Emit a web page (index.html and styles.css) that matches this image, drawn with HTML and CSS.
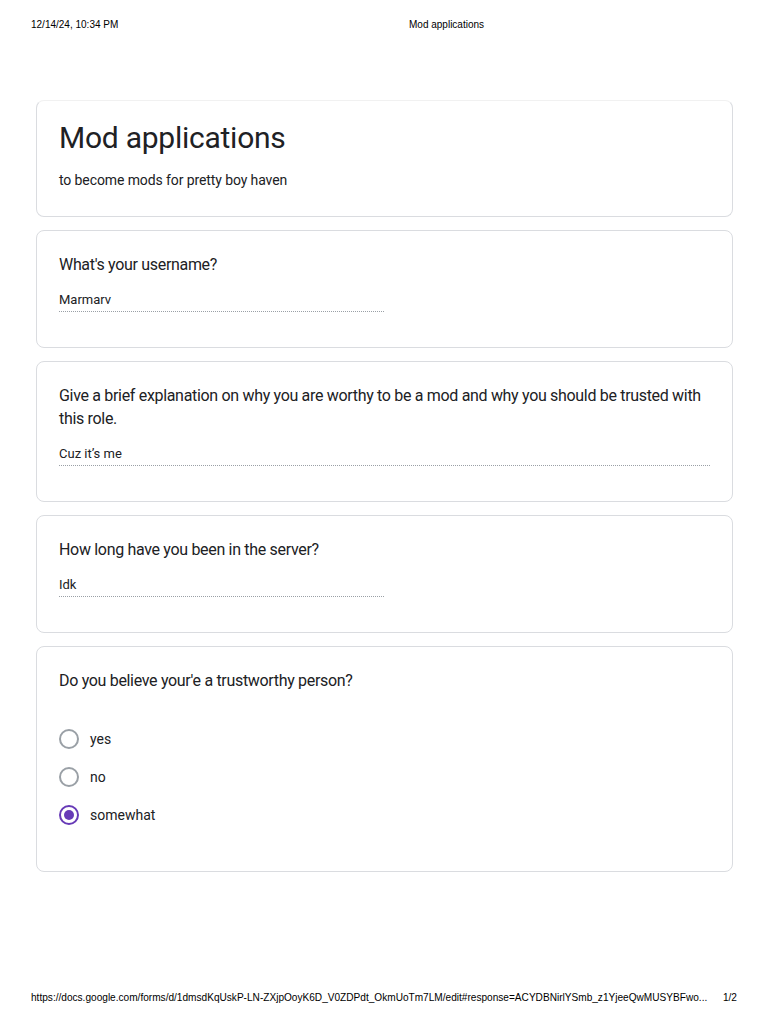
FILE: index.html
```html
<!DOCTYPE html>
<html lang="en">
<head>
  <meta charset="UTF-8">
  <title>Mod applications</title>
  <link rel="stylesheet" href="styles.css">
</head>
<body>
  <div class="print-head">
    <span class="print-date">12/14/24, 10:34 PM</span>
    <span class="print-title">Mod applications</span>
  </div>

  <div class="form">
    <div class="card title-card">
      <h1>Mod applications</h1>
      <p class="desc">to become mods for pretty boy haven</p>
    </div>

    <div class="card">
      <div class="question">What's your username?</div>
      <div class="answer short">Marmarv</div>
    </div>

    <div class="card">
      <div class="question">Give a brief explanation on why you are worthy to be a mod and why you should be trusted with this role.</div>
      <div class="answer long">Cuz it’s me</div>
    </div>

    <div class="card">
      <div class="question">How long have you been in the server?</div>
      <div class="answer short">Idk</div>
    </div>

    <div class="card">
      <div class="question">Do you believe your'e a trustworthy person?</div>
      <div class="options">
        <div class="option"><span class="radio"></span>yes</div>
        <div class="option"><span class="radio"></span>no</div>
        <div class="option"><span class="radio checked"></span>somewhat</div>
      </div>
    </div>
  </div>

  <div class="print-foot">
    <span class="print-url">https://docs.google.com/forms/d/1dmsdKqUskP-LN-ZXjpOoyK6D_V0ZDPdt_OkmUoTm7LM/edit#response=ACYDBNirlYSmb_z1YjeeQwMUSYBFwo...</span>
    <span class="print-page">1/2</span>
  </div>
</body>
</html>
```

FILE: styles.css
```css
body {
  margin: 0;
  width: 768px;
  height: 1024px;
  position: relative;
  background: #fff;
  font-family: Roboto, "Liberation Sans", Arial, sans-serif;
  color: #202124;
}
.print-head {
  display: flex;
  padding: 19px 31px 0;
  height: 20px;
  font-family: "Liberation Sans", Arial, sans-serif;
  font-size: 10px;
  color: #000;
}
.print-date {
  width: 378px;
}
.print-foot {
  position: absolute;
  left: 31px;
  right: 31px;
  top: 992px;
  display: flex;
  justify-content: space-between;
  font-family: "Liberation Sans", Arial, sans-serif;
  font-size: 10.1px;
  color: #000;
}
.form {
  margin: 61px 35px 0 36px;
  display: flex;
  flex-direction: column;
  gap: 13px;
}
.card {
  border: 1px solid #dadce0;
  border-radius: 8px;
  padding: 22px 22px 35px;
  background: #fff;
}
.title-card {
  border-top-color: #f1f1f1;
  padding: 19px 22px 26px;
}
h1 {
  margin: 0;
  font-size: 30px;
  font-weight: 400;
  line-height: 36px;
  letter-spacing: -0.25px;
}
.desc {
  margin: 14px 0 0;
  font-size: 14px;
  line-height: 20px;
  letter-spacing: -0.1px;
}
.question {
  font-size: 16px;
  line-height: 23px;
  letter-spacing: -0.32px;
}
.answer {
  margin-top: 15px;
  font-size: 13px;
  line-height: 18px;
  padding-bottom: 2px;
  border-bottom: 1px dotted #9aa0a6;
}
.answer.short {
  width: 325px;
}
.options {
  margin: 28px 0 2px;
}
.option {
  display: flex;
  align-items: center;
  height: 38px;
  font-size: 14px;
}
.radio {
  width: 16px;
  height: 16px;
  border: 2px solid #9aa0a6;
  border-radius: 50%;
  margin-right: 11px;
  position: relative;
}
.radio.checked {
  border-color: #673ab7;
}
.radio.checked::after {
  content: "";
  position: absolute;
  left: 3px;
  top: 3px;
  width: 10px;
  height: 10px;
  border-radius: 50%;
  background: #673ab7;
}
```
